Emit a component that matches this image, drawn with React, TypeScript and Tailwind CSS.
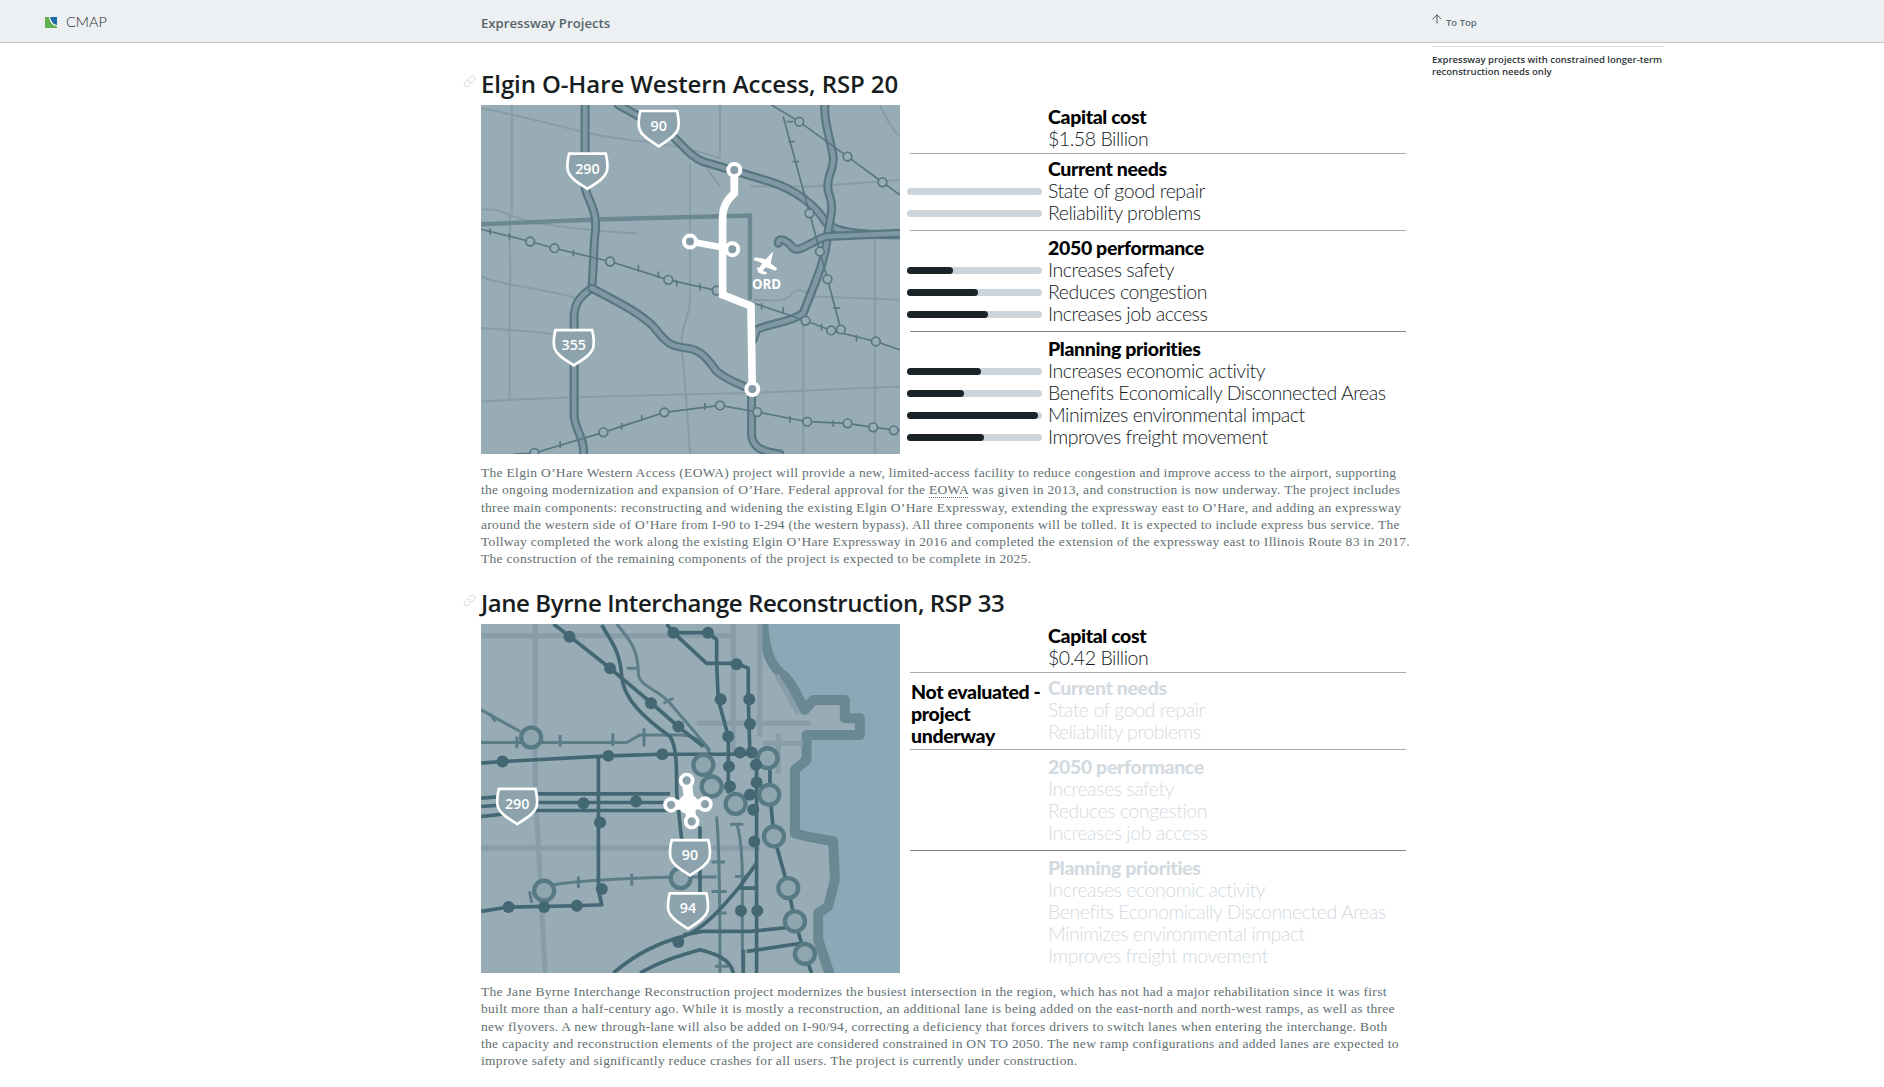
import { Fragment } from "react"
import { ArrowUp, Link as LinkIcon } from "lucide-react"

const MAP_BG = "#98acb5"
const ROAD = "#869ca6"
const HWY_OUT = "#577782"
const HWY_IN = "#7f98a2"
const DARK = "#436874"

const Shield = ({ x, y, label }: { x: number; y: number; label: string }) => (
    <g transform={`translate(${x} ${y})`}>
        <path d="M-55 0 H55 C60 20 62 38 58 54 C50 78 20 92 0 106 C-20 92 -50 78 -58 54 C-62 38 -60 20 -55 0Z" fill="#8ca2ac" stroke="#fff" strokeWidth="8" />
        <text x="0" y="60" textAnchor="middle" fill="#fff" fontSize="43" fontWeight="600" fontFamily="'Open Sans', sans-serif">{label}</text>
    </g>
)

const Highway = ({ d }: { d: string }) => (
    <g fill="none" strokeLinejoin="round" strokeLinecap="round">
        <path d={d} stroke={HWY_OUT} strokeWidth="27" />
        <path d={d} stroke={HWY_IN} strokeWidth="14" />
    </g>
)

const Elgin = () => {
    const stations = [[180, 425], [253, 445], [420, 485], [595, 540], [740, 572], [1007, 663], [1084, 692], [1113, 689], [1218, 725], [193, 1060], [400, 998], [583, 938], [750, 917], [862, 937], [1012, 966], [1133, 971], [1210, 983], [1272, 992], [988, 65], [1133, 170], [1238, 247], [1019, 340], [1050, 455], [1073, 538]]
    const spots = [[793, 210], [660, 425], [787, 448], [847, 868]]
    return (
        <svg viewBox="33 15 1257 1048" className="block h-[349px] w-[419px] shrink-0" style={{ background: MAP_BG }}>
            <g fill="none" stroke={ROAD} strokeWidth="6" strokeLinejoin="round">
                <path d="M33 25 C120 40 250 75 360 100 C450 125 600 120 750 175" />
                <path d="M125 15 V340 M120 340 C115 450 125 520 118 570 V900" />
                <path d="M33 330 C90 320 110 350 200 370 C280 380 360 395 500 400" />
                <path d="M33 530 C100 560 200 560 320 595" />
                <path d="M33 685 C120 690 200 695 260 705" />
                <path d="M33 905 C300 890 600 885 840 880 L1290 860" />
                <path d="M660 190 V600 C660 650 630 680 635 740 C640 800 650 900 660 1063" />
                <path d="M750 15 V175 M700 190 L750 260" />
                <path d="M1000 650 V1063 M1215 410 V1063" />
                <path d="M1230 15 C1250 60 1270 90 1290 110" />
                <path d="M840 260 H1020 L1290 240" />
                <path d="M850 600 C900 600 930 610 960 590 C980 560 1000 570 1030 590 L1290 600" />
            </g>
            <path d="M33 373 L400 358 L840 347 V600" fill="none" stroke="#6b8893" strokeWidth="13" />
            <Highway d="M445 15 L600 100 C650 150 670 175 700 185 L900 245 C980 270 1040 320 1070 370 C1100 395 1150 405 1290 405" />
            <Highway d="M345 15 V260 C350 300 385 330 375 400 C370 450 370 520 365 565 C330 590 310 610 312 660 V950 C315 990 345 1020 340 1063" />
            <Highway d="M365 565 C450 610 510 640 550 680 C590 730 600 740 650 745 C700 750 720 790 740 815 C770 840 800 850 845 870 V1010 C850 1040 870 1055 930 1063" />
            <Highway d="M1065 15 C1060 60 1080 110 1090 170 C1095 210 1060 240 1080 290 C1095 330 1075 370 1070 430 C1060 500 1030 560 1000 640 C960 670 900 670 860 690 L850 720" />
            <Highway d="M925 430 C925 410 950 420 970 445 C990 460 1030 420 1070 410 L1290 400" />
            <g fill="none" stroke={HWY_OUT} strokeWidth="5">
                <path d="M33 388 L180 425 L253 445 L420 485 L595 540 L740 572 L1007 663 L1084 692 L1218 725 L1290 750" />
                <path d="M130 1063 L193 1060 L400 998 L583 938 L750 917 L862 937 L1012 966 L1133 971 L1210 983 L1290 992" />
                <path d="M905 15 L988 65 L1133 170 L1238 247 L1290 285" />
                <path d="M940 50 L1019 340 L1050 455 L1073 538 L1113 689" />
                <path d="M60 385 V405 M118 400 V420 M310 450 V470 M505 495 V515 M565 515 V535 M620 540 V560 M690 552 V572 M875 610 V630 M940 622 V642 M1055 672 V692 M1160 705 V725 M270 1025 V1045 M455 970 V990 M515 945 V965 M705 910 V930 M960 950 V970 M1090 962 V982 M950 65 H970 M955 125 H975 M968 185 H988 M1090 625 H1110" />
            </g>
            {stations.map(([x, y]) => (
                <circle key={`${x}-${y}`} cx={x} cy={y} r="13" fill={MAP_BG} stroke={HWY_OUT} strokeWidth="5" />
            ))}
            <path d="M793 210 V280 C770 300 758 320 758 350 V585 L843 618 L847 868" fill="none" stroke="#fff" strokeWidth="23" />
            <path d="M660 425 L787 448" stroke="#fff" strokeWidth="20" />
            {spots.map(([x, y]) => (
                <circle key={`${x}-${y}`} cx={x} cy={y} r="18" fill="#869ca6" stroke="#fff" strokeWidth="12" />
            ))}
            <path d="M910 456 L902 490 L922 506 L916 513 L888 502 L878 512 L892 519 L886 525 L866 519 L860 503 L868 504 L877 490 L850 480 L857 472 L888 478 L903 461 Z" fill="#fff" />
            <text x="890" y="567" textAnchor="middle" fill="#fff" fontSize="40" fontWeight="700" fontFamily="'Open Sans', sans-serif">ORD</text>
            <Shield x={566} y={33} label="90" />
            <Shield x={352} y={161} label="290" />
            <Shield x={311} y={691} label="355" />
        </svg>
    )
}

const Byrne = () => {
    const rings = [[183, 353], [222, 813], [700, 435], [725, 500], [893, 415], [898, 525], [797, 552], [912, 650], [955, 805], [975, 905], [1005, 1003], [632, 775]]
    const dots = [[298, 50], [420, 145], [543, 250], [625, 320], [610, 38], [714, 38], [800, 133], [752, 238], [838, 238], [840, 312], [775, 350], [810, 398], [845, 398], [777, 440], [858, 435], [780, 500], [860, 488], [840, 525], [850, 570], [853, 665], [813, 873], [862, 873], [97, 425], [415, 408], [577, 403], [340, 550], [498, 545], [390, 608], [395, 808], [320, 858], [222, 862], [115, 862], [625, 967]]
    const cross = [[650, 482], [603, 555], [705, 553], [665, 605]]
    return (
        <svg viewBox="33 12 1257 1048" className="block h-[349px] w-[419px] shrink-0" style={{ background: MAP_BG }}>
            <path d="M880 -20 L880 12 C885 90 900 140 945 170 C975 200 985 240 1005 270 L1030 240 H1125 V295 H1170 V345 H1010 V420 L975 450 V640 L1010 650 L1090 665 L1095 780 L1075 860 L1045 880 V960 L1085 1080 H1320 V-20 Z" fill="#8aa9b6" stroke="#6a8894" strokeWidth="30" strokeLinejoin="round" />
            <g fill="none" stroke="#879da7" strokeWidth="15">
                <path d="M33 47 H790 M195 12 V500 L225 1060 M33 685 H870 M790 12 V400" />
                <path d="M680 310 H1020 M870 12 V350 M920 165 L985 280 M880 370 H1000 M925 340 V460" />
            </g>
            <g fill="none" stroke="#5b7d88" strokeWidth="9" strokeLinejoin="round">
                <path d="M33 270 L150 335 M33 368 H470 L510 345 H640 C680 350 705 370 720 400" />
                <path d="M250 795 C350 780 500 775 620 772 H740" />
                <path d="M60 280 L75 305 M140 350 V385 M270 345 V380 M428 340 V378 M522 325 V380 M325 770 V805 M485 762 V798 M178 815 L185 850" />
                <path d="M440 12 C480 60 505 90 505 160 C505 200 570 210 600 250 L720 390" />
                <path d="M740 590 C750 700 750 900 750 1060 M800 610 C830 700 810 900 820 1060" />
                <path d="M725 727 H765 M725 815 H770 M740 880 H770 M735 1040 H775 M780 613 H820 M795 770 H835 M470 145 H500 M580 250 L610 235" />
            </g>
            <g fill="none" stroke={DARK} strokeWidth="11" strokeLinejoin="round">
                <path d="M250 12 L300 50 L420 145 L545 250 L625 320 L700 380" />
                <path d="M590 12 L610 38 H715 L740 60 V130 L745 240 L775 350 V520" />
                <path d="M610 38 L710 130 H800 L835 145 V240 L840 400 H860 V1060" />
                <path d="M33 430 L97 425 L415 408 L575 403 H850" />
                <path d="M385 410 V810 L395 855 L320 858 L115 862 L33 875" />
                <path d="M33 535 L200 522 H600 M33 560 L200 548 H600 M33 590 L200 572 H600" />
                <path d="M395 15 C420 60 450 90 455 170 C460 240 530 300 600 350 C620 380 620 440 620 520 L635 660 M690 620 V830" />
                <path d="M430 1060 C500 1000 580 965 640 950 C700 930 760 860 810 800 L860 730" />
                <path d="M510 1060 C580 1020 640 1005 690 990 C720 1000 780 1010 790 1060" />
                <path d="M640 945 L700 935 L840 935 L940 925 H1000 M830 995 L1000 970 M820 1060 V990 M810 805 H860" />
                <path d="M900 450 V520 L912 650 L955 805 L975 905 L1005 1003 L1025 1060" />
            </g>
            {rings.map(([x, y]) => (
                <circle key={`${x}-${y}`} cx={x} cy={y} r="30" fill="#90a6af" stroke="#587a85" strokeWidth="13" />
            ))}
            {dots.map(([x, y]) => (
                <circle key={`${x}-${y}`} cx={x} cy={y} r="18" fill={DARK} />
            ))}
            <path d="M650 482 L665 605 M603 555 L705 553" stroke="#fff" strokeWidth="30" />
            <circle cx="655" cy="553" r="30" fill="#fff" />
            {cross.map(([x, y]) => (
                <circle key={`${x}-${y}`} cx={x} cy={y} r="18" fill="#8ca2ac" stroke="#fff" strokeWidth="11" />
            ))}
            <Shield x={141} y={507} label="290" />
            <Shield x={660} y={661} label="90" />
            <Shield x={654} y={821} label="94" />
        </svg>
    )
}

const groups = [
    { title: "Current needs", rule: "border-[#a9adb0]", pad: "pt-[4px] pb-[6px]", rows: [["State of good repair", 0], ["Reliability problems", 0]] },
    { title: "2050 performance", rule: "border-[#7f8386]", pad: "pt-[6px] pb-[6px]", rows: [["Increases safety", 46], ["Reduces congestion", 71], ["Increases job access", 81]] },
    { title: "Planning priorities", rule: "", pad: "pt-[6px]", rows: [["Increases economic activity", 74], ["Benefits Economically Disconnected Areas", 57], ["Minimizes environmental impact", 131], ["Improves freight movement", 77]] },
] as const

const Stats = ({ cost, evaluated }: { cost: string; evaluated: boolean }) => (
    <div className="relative ml-[10px] w-[496px] pt-px font-['Lato',sans-serif] text-[19.5px] font-light leading-[22px] tracking-[-0.45px] text-[#14191c]">
        <div className="border-b border-[#a9adb0] pb-[3px] pl-[138px]">
            <p className="font-black tracking-[-0.35px] text-black">Capital cost</p>
            <p>{cost}</p>
        </div>
        {!evaluated && (
            <p className="absolute left-px top-[57px] w-[130px] font-black tracking-[-0.35px] text-black">Not evaluated - project underway</p>
        )}
        {groups.map((g) => (
            <div key={g.title} className={`${g.pad} ${g.rule ? `border-b ${g.rule}` : ""}`}>
                <p className={`pl-[138px] font-black tracking-[-0.35px] ${evaluated ? "text-black" : "text-[#d3dae0]"}`}>{g.title}</p>
                {g.rows.map(([label, score]) => (
                    <div key={label} className="flex items-center">
                        {evaluated ? (
                            <div className="-ml-[3px] mr-[6px] h-[7px] w-[135px] shrink-0 rounded-full bg-[#cdd5dc]">
                                <div className="h-full rounded-full bg-[#1a2328]" style={{ width: score }} />
                            </div>
                        ) : (
                            <div className="w-[138px] shrink-0" />
                        )}
                        <p className={evaluated ? "" : "text-[#d3dae0]"}>{label}</p>
                    </div>
                ))}
            </div>
        ))}
    </div>
)

const Project = ({ title, titleClass, map, cost, evaluated, lines }: { title: string; titleClass: string; map: React.ReactNode; cost: string; evaluated: boolean; lines: React.ReactNode[] }) => (
    <section>
        <h2 className={`relative h-[32px] font-['Open_Sans',sans-serif] text-[24px] font-semibold leading-[32px] text-[#171d20] ${titleClass}`}>
            <LinkIcon size={13} strokeWidth={1.5} className="absolute -left-[18px] top-[7px] text-[#c9cdd0]" />
            {title}
        </h2>
        <div className="mt-[5px] flex">
            {map}
            <Stats cost={cost} evaluated={evaluated} />
        </div>
        <p className="mt-[10px] font-['Liberation_Serif',serif] text-[13.5px] leading-[17.25px] tracking-[0.3px] text-[#626f72]">
            {lines.map((line, i) => (
                <Fragment key={i}>
                    <span className="block whitespace-nowrap">{line}</span>
                </Fragment>
            ))}
        </p>
    </section>
)

export default function App() {
    return (
        <div className="min-h-[1087px] overflow-hidden bg-white">
            <header className="flex h-[43px] border-b border-[#c3c7c9] bg-[#ecf0f3]">
                <div className="flex w-[481px] items-center pl-[45px] pt-[2px]">
                    <svg viewBox="0 0 12 11" className="h-[11px] w-[12px]">
                        <rect width="12" height="11" fill="#62b04f" />
                        <path d="M5 0 H12 V8 C9 8 6 5 5 0Z" fill="#1b6ca8" />
                        <path d="M5 0 C6 5 9 8 12 8 V9 C8 9 5 6 4 0Z" fill="#fff" />
                    </svg>
                    <span className="ml-[9px] font-['Lato',sans-serif] text-[14.5px] font-light text-[#1f2c31]">CMAP</span>
                </div>
                <p className="w-[951px] pt-[14px] font-['Open_Sans',sans-serif] text-[13.2px] font-semibold leading-[18px] text-[#56646a]">Expressway Projects</p>
                <div className="-ml-[2px] flex items-start pt-[12px] font-['Open_Sans',sans-serif] text-[9.5px] font-semibold leading-[15px] text-[#5f6c72]">
                    <ArrowUp size={14} strokeWidth={1.5} className="text-[#3b474c]" />
                    <span className="ml-[2px] mt-[3px]">To Top</span>
                </div>
            </header>
            <div className="flex">
                <main className="ml-[481px] flex w-[951px] flex-col gap-[19.5px] pt-[25px]">
                    <Project
                        title="Elgin O-Hare Western Access, RSP 20"
                        titleClass="tracking-[-0.1px]"
                        map={<Elgin />}
                        cost="$1.58 Billion"
                        evaluated
                        lines={[
                            "The Elgin O’Hare Western Access (EOWA) project will provide a new, limited-access facility to reduce congestion and improve access to the airport, supporting",
                            <>the ongoing modernization and expansion of O’Hare. Federal approval for the <span className="border-b border-dotted border-[#5d6a6e]">EOWA</span> was given in 2013, and construction is now underway. The project includes</>,
                            "three main components: reconstructing and widening the existing Elgin O’Hare Expressway, extending the expressway east to O’Hare, and adding an expressway",
                            "around the western side of O’Hare from I-90 to I-294 (the western bypass). All three components will be tolled. It is expected to include express bus service. The",
                            "Tollway completed the work along the existing Elgin O’Hare Expressway in 2016 and completed the extension of the expressway east to Illinois Route 83 in 2017.",
                            "The construction of the remaining components of the project is expected to be complete in 2025.",
                        ]}
                    />
                    <Project
                        title="Jane Byrne Interchange Reconstruction, RSP 33"
                        titleClass="tracking-[-0.42px]"
                        map={<Byrne />}
                        cost="$0.42 Billion"
                        evaluated={false}
                        lines={[
                            "The Jane Byrne Interchange Reconstruction project modernizes the busiest intersection in the region, which has not had a major rehabilitation since it was first",
                            "built more than a half-century ago. While it is mostly a reconstruction, an additional lane is being added on the east-north and north-west ramps, as well as three",
                            "new flyovers. A new through-lane will also be added on I-90/94, correcting a deficiency that forces drivers to switch lanes when entering the interchange. Both",
                            "the capacity and reconstruction elements of the project are considered constrained in ON TO 2050. The new ramp configurations and added lanes are expected to",
                            "improve safety and significantly reduce crashes for all users. The project is currently under construction.",
                        ]}
                    />
                </main>
                <aside className="w-[232px]">
                    <div className="mt-[3px] border-t border-[#dfe5ea] pt-[7px] font-['Open_Sans',sans-serif] text-[9.5px] font-semibold leading-[12px] text-[#2d3438]">
                        Expressway projects with constrained longer-term<br />reconstruction needs only
                    </div>
                </aside>
            </div>
        </div>
    )
}
